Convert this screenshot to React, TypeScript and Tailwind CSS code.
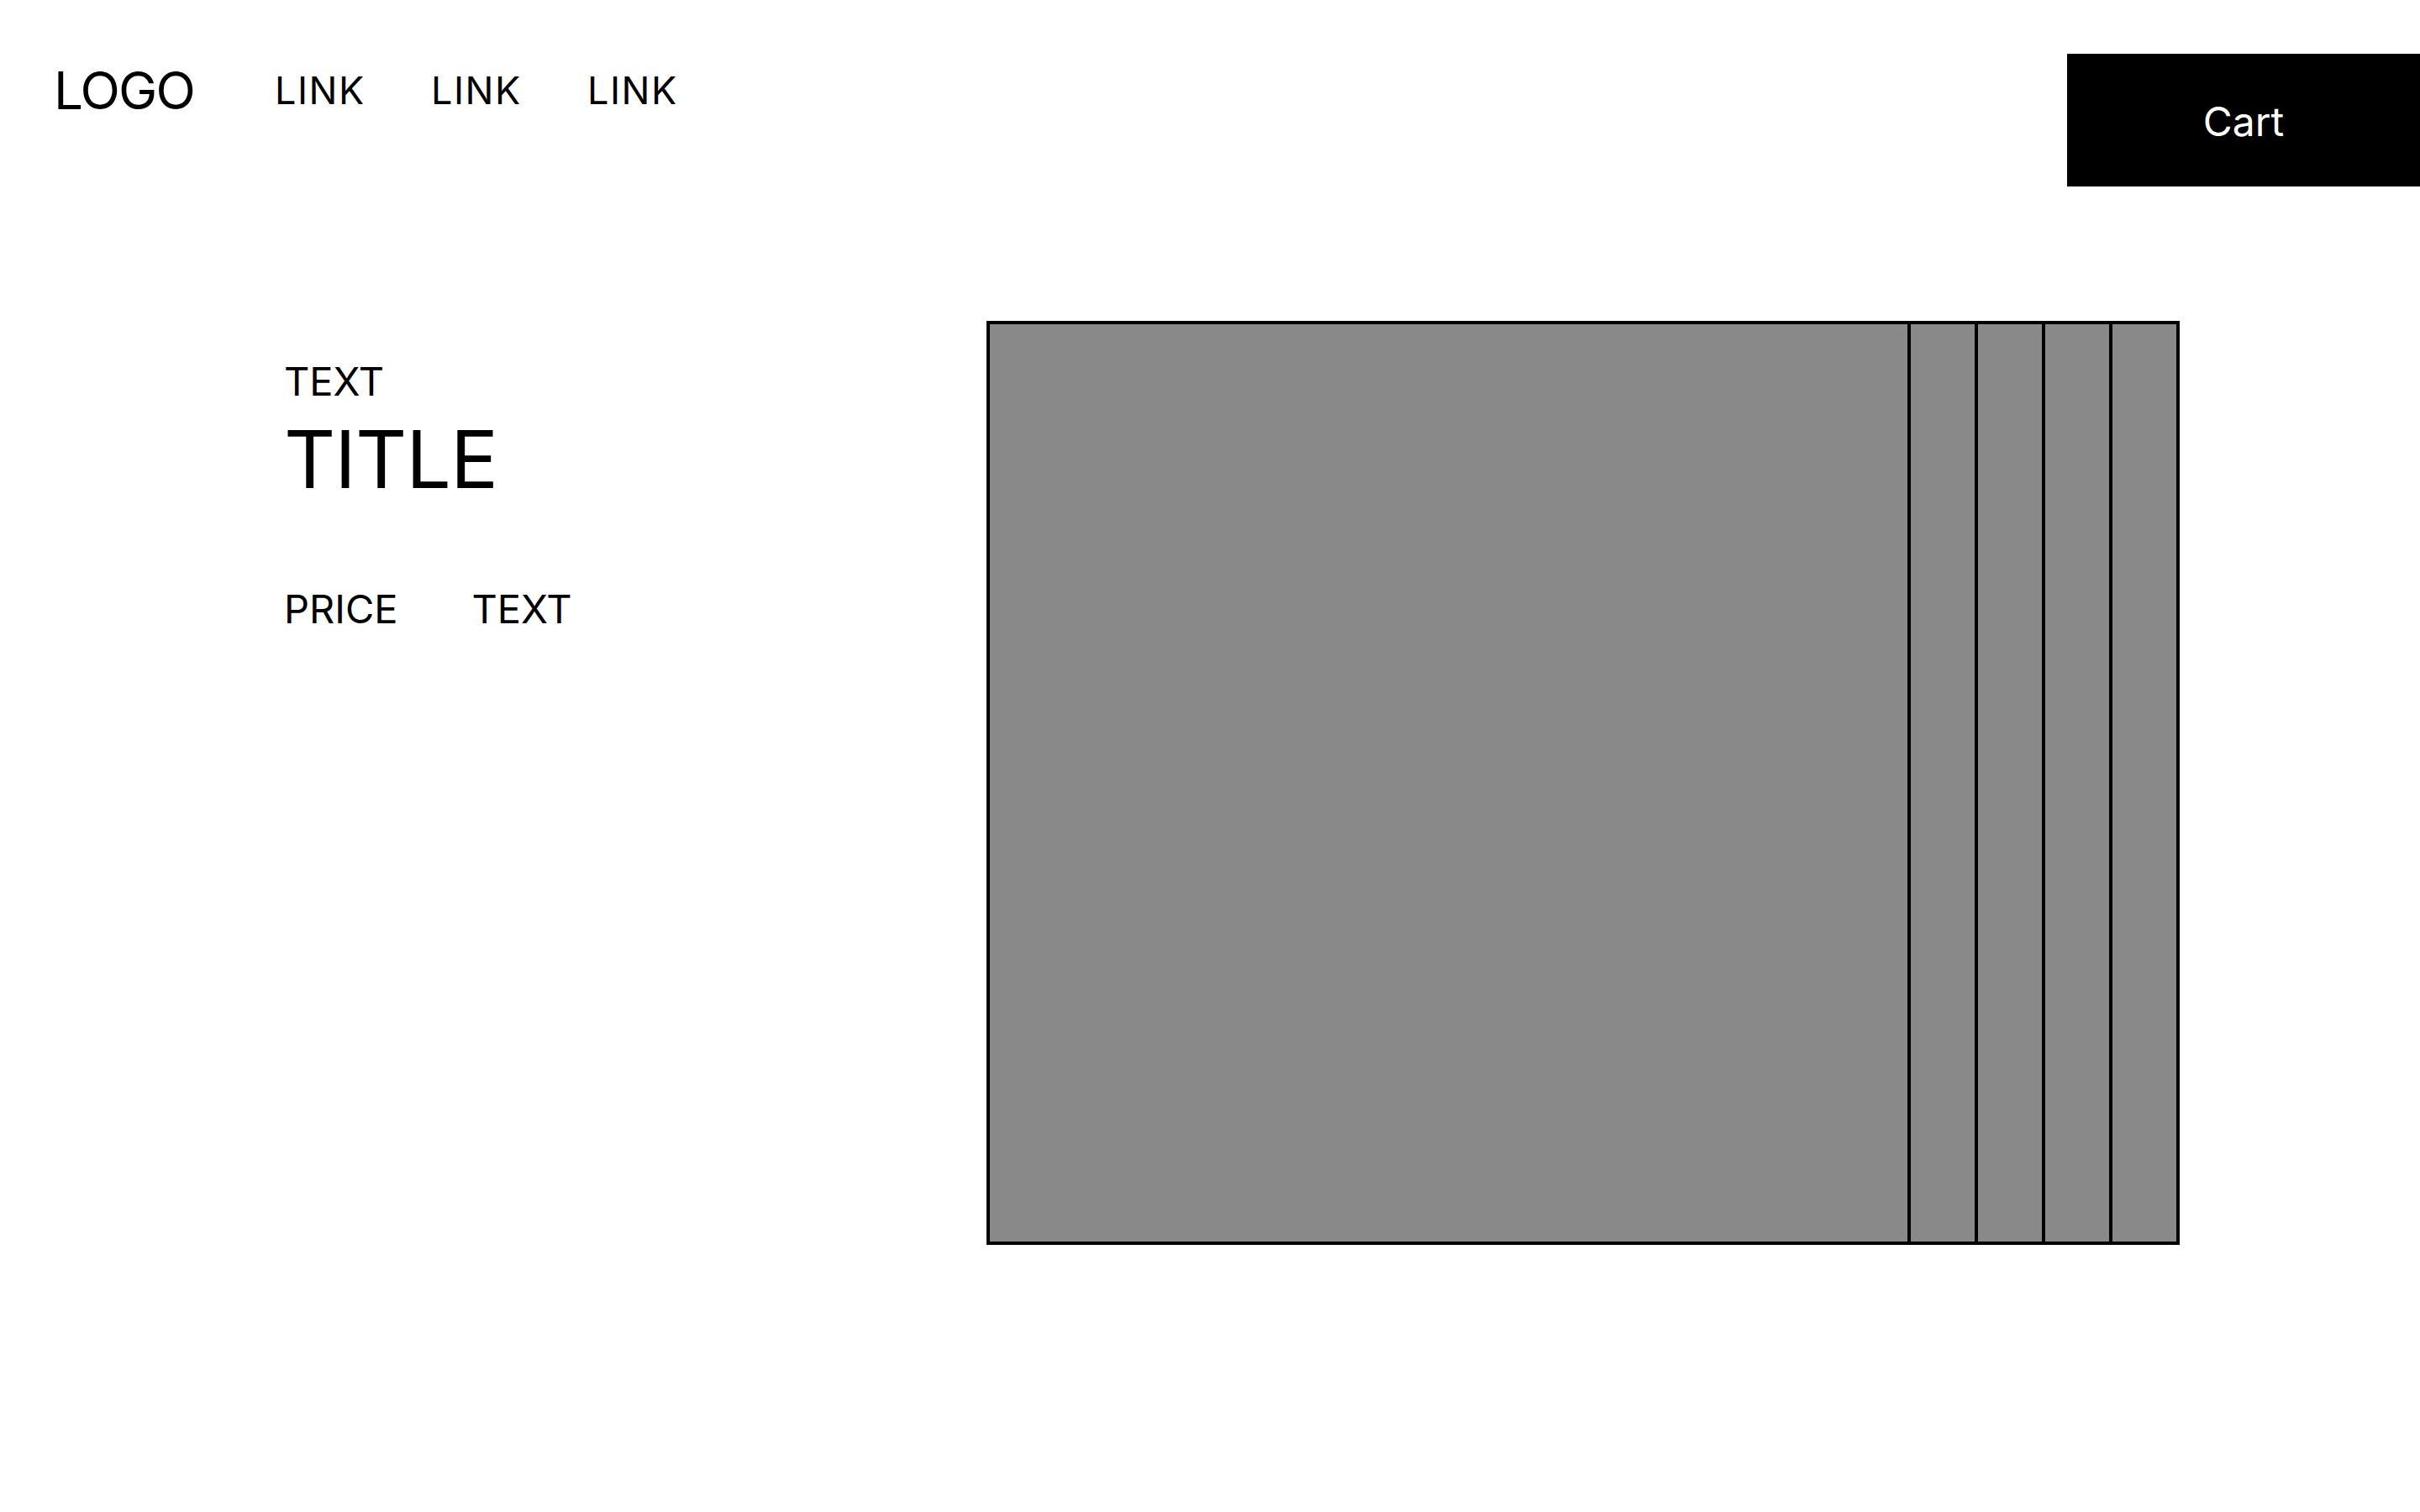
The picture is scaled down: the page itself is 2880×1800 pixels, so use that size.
const links = ["LINK", "LINK", "LINK"];
const thumbs = [1, 2, 3, 4];

export default function App() {
  return (
    <div className="min-h-screen w-full bg-white font-['Inter','Noto_Sans',sans-serif] text-black">
      <header className="flex items-start justify-between pt-[64px]">
        <nav className="flex h-[87px] items-center pl-[64px]">
          <span className="text-[62px] leading-none tracking-[-0.03em]">LOGO</span>
          <div className="ml-[96px] flex gap-[78px] text-[45px] leading-none tracking-[0.035em]">
            {links.map((l, i) => (
              <a key={i} href="#">
                {l}
              </a>
            ))}
          </div>
        </nav>
        <button className="flex h-[158px] w-[420px] items-center justify-center bg-black pt-[3px] text-[48px] leading-none text-white">
          Cart
        </button>
      </header>

      <main className="mt-[160px] flex pl-[338px]">
        <section className="w-[836px] pt-[48px]">
          <p className="text-[47px] leading-none">TEXT</p>
          <h1 className="mt-[22px] text-[95px] leading-none tracking-[-0.01em]">TITLE</h1>
          <div className="mt-[107px] flex gap-[88px] text-[47px] leading-none">
            <span>PRICE</span>
            <span>TEXT</span>
          </div>
        </section>

        <div className="flex border-4 border-black">
          <div className="size-[1092px] bg-[#898989]" />
          {thumbs.map((t) => (
            <div key={t} className="h-[1092px] w-[80px] border-l-4 border-black bg-[#898989]" />
          ))}
        </div>
      </main>
    </div>
  );
}
